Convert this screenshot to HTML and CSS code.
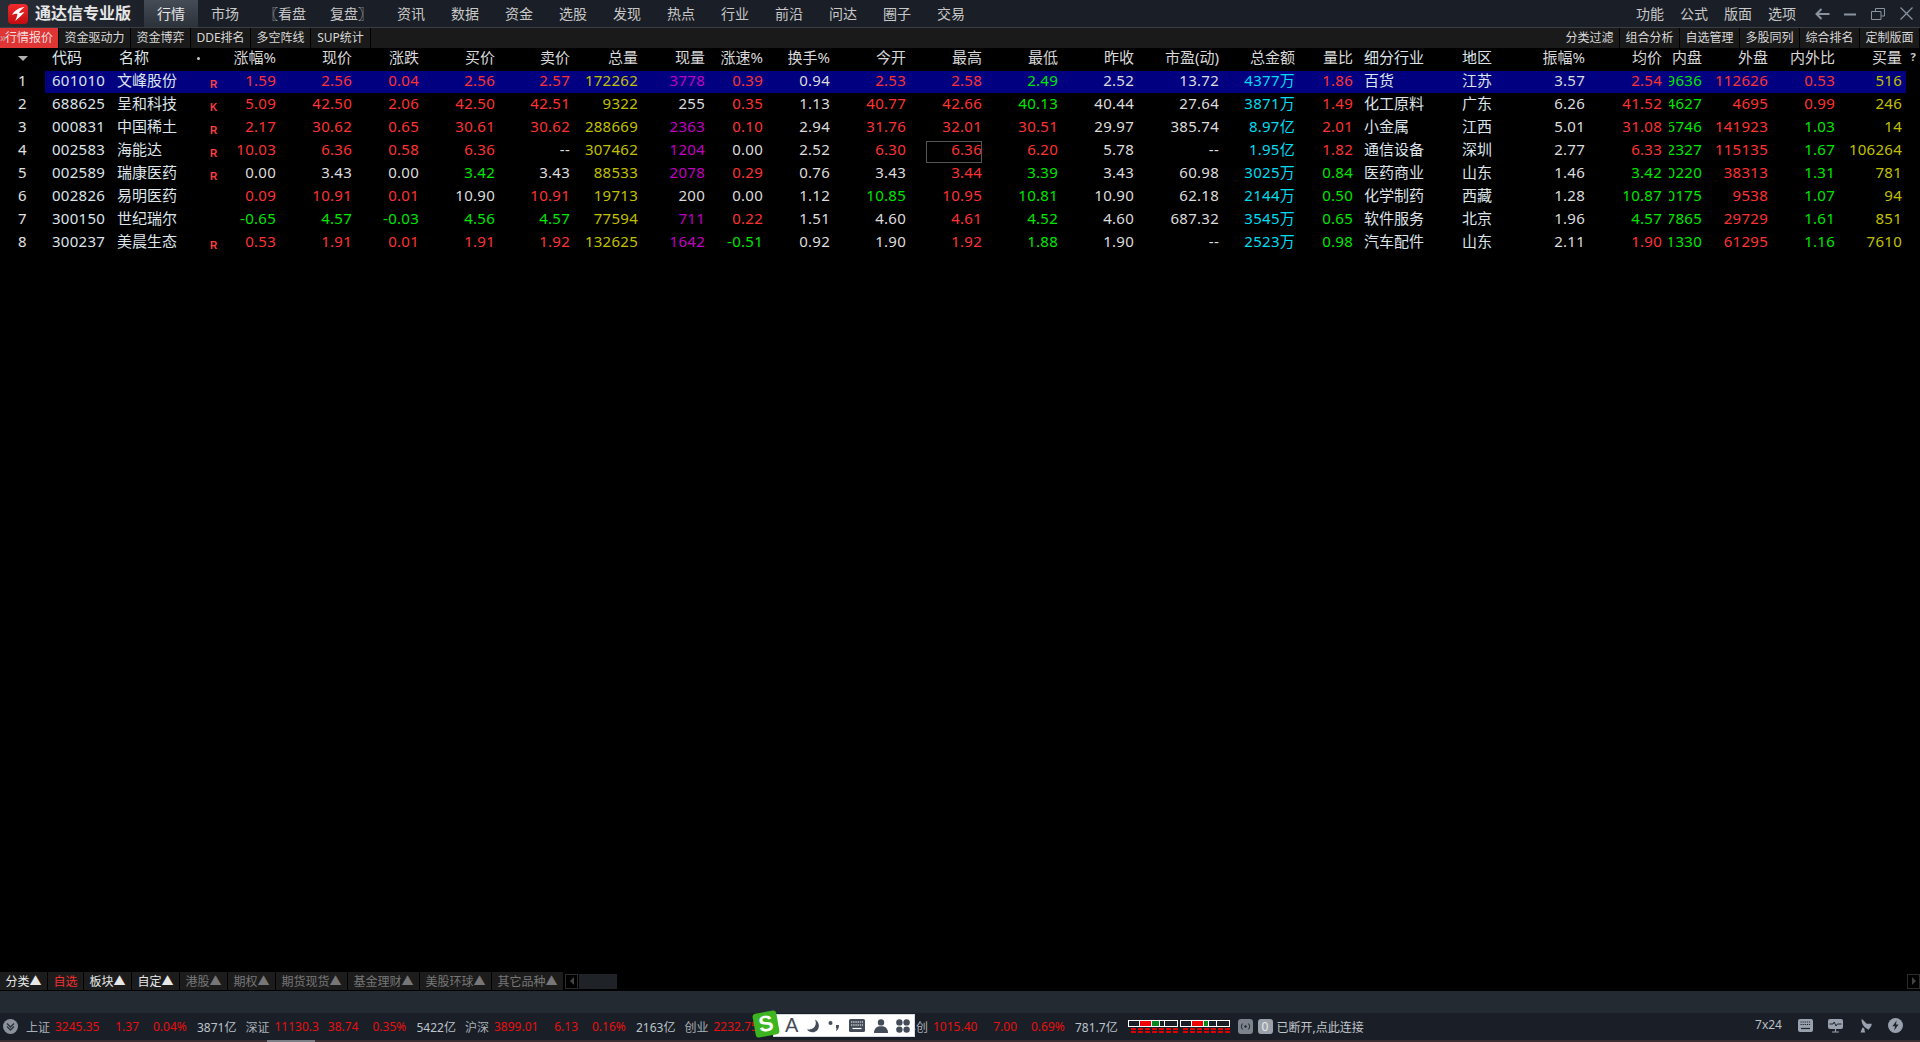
FILE: index.html
```html
<!DOCTYPE html>
<html lang="zh-CN">
<head>
  <meta charset="UTF-8" />
  <title>通达信专业版</title>
  <link rel="stylesheet" href="styles.css">
</head>
<body>

  <header class="titlebar">
    <div class="brand">
      <svg class="logo" viewBox="0 0 20 20">
        <defs>
          <linearGradient id="logoRed" x1="0" y1="0" x2="0" y2="1">
            <stop offset="0" stop-color="#f02a2c"/>
            <stop offset="1" stop-color="#c20c10"/>
          </linearGradient>
        </defs>
        <rect width="20" height="20" rx="4" fill="url(#logoRed)"/>
        <path d="M16.5 3 C12 3.5 7 5.5 4 11 C6 10 8 9.5 9.5 10 C9 12.5 8.5 14.5 7 17 C10.5 14.5 13 12 16.5 8 C14.5 8.5 12.5 9 11 9 C12 7 14 5 16.5 3 Z" fill="#fff"/>
      </svg>
      <span class="brand-name">通达信专业版</span>
    </div>
    <nav class="menu">
      <a class="active">行情</a>
      <a>市场</a>
      <a class="wide">〖看盘</a>
      <a class="wide">复盘〗</a>
      <a>资讯</a>
      <a>数据</a>
      <a>资金</a>
      <a>选股</a>
      <a>发现</a>
      <a>热点</a>
      <a>行业</a>
      <a>前沿</a>
      <a>问达</a>
      <a>圈子</a>
      <a>交易</a>
    </nav>
    <nav class="menu-right">
      <a>功能</a>
      <a>公式</a>
      <a>版面</a>
      <a>选项</a>
    </nav>
    <div class="window-btns">
      <svg viewBox="0 0 15 12" class="win-back"><path d="M14.5 6 H2 M6.5 1 L1.5 6 L6.5 11" fill="none" stroke="#8a94a0" stroke-width="2"/></svg>
      <svg viewBox="0 0 12 12" class="win-min"><path d="M0 6.5 H12" stroke="#8a94a0" stroke-width="2"/></svg>
      <svg viewBox="0 0 14 12" class="win-restore"><path d="M4.5 3 V.5 H13.5 V8 H10.5 M.5 3.5 H10 V11.5 H.5 Z" fill="none" stroke="#8a94a0"/></svg>
      <svg viewBox="0 0 13 13" class="win-close"><path d="M.5 .5 L12.5 12.5 M12.5 .5 L.5 12.5" stroke="#8a94a0" stroke-width="1.2"/></svg>
    </div>
  </header>

  <div class="subbar">
    <a class="sub active"><i class="sub-mark">»</i>行情报价</a>
    <a class="sub w-71">资金驱动力</a>
    <a class="sub">资金博弈</a>
    <a class="sub">DDE排名</a>
    <a class="sub">多空阵线</a>
    <a class="sub">SUP统计</a>
    <div class="subbar-fill"></div>
    <a class="sub">分类过滤</a>
    <a class="sub">组合分析</a>
    <a class="sub">自选管理</a>
    <a class="sub">多股同列</a>
    <a class="sub">综合排名</a>
    <a class="sub">定制版面</a>
  </div>

  <main class="board">
    <table class="quotes">
      <colgroup>
        <col style="width:45px"><col style="width:72px"><col style="width:75px"><col style="width:33px">
        <col style="width:51px"><col style="width:76px"><col style="width:67px"><col style="width:76px">
        <col style="width:75px"><col style="width:68px"><col style="width:67px"><col style="width:58px">
        <col style="width:67px"><col style="width:76px"><col style="width:76px"><col style="width:76px">
        <col style="width:76px"><col style="width:85px"><col style="width:76px"><col style="width:58px">
        <col style="width:109px"><col style="width:58px"><col style="width:65px"><col style="width:84px">
        <col style="width:33px"><col style="width:66px"><col style="width:67px"><col style="width:71px">
        <col style="width:14px">
      </colgroup>
      <thead>
        <tr>
          <th class="idx"><span class="sort-mark"></span></th>
          <th class="code">代码</th>
          <th class="name">名称</th>
          <th class="flag-head"><span class="dot"></span></th>
          <th>涨幅%</th><th>现价</th><th>涨跌</th><th>买价</th><th>卖价</th><th>总量</th><th>现量</th>
          <th>涨速%</th><th>换手%</th><th>今开</th><th>最高</th><th>最低</th><th>昨收</th><th>市盈(动)</th>
          <th>总金额</th><th>量比</th>
          <th class="sector">细分行业</th>
          <th class="area">地区</th>
          <th>振幅%</th>
          <th class="avg">均价</th>
          <th class="inner">内盘</th>
          <th>外盘</th><th>内外比</th>
          <th class="last">买量</th>
          <th class="help">?</th>
        </tr>
      </thead>
      <tbody>
        <tr class="selected">
          <td class="idx">1</td><td class="code">601010</td><td class="name">文峰股份</td><td class="flag">R</td>
          <td class="r">1.59</td><td class="r">2.56</td><td class="r">0.04</td><td class="r">2.56</td><td class="r">2.57</td>
          <td class="y">172262</td><td class="m">3778</td><td class="r">0.39</td><td class="w">0.94</td>
          <td class="r">2.53</td><td class="r">2.58</td><td class="g">2.49</td><td class="w">2.52</td><td class="w">13.72</td>
          <td class="c">4377万</td><td class="r">1.86</td><td class="sector">百货</td><td class="area">江苏</td><td class="w">3.57</td>
          <td class="r avg">2.54</td><td class="g inner">59636</td><td class="r">112626</td><td class="r">0.53</td><td class="y last">516</td><td class="help"></td>
        </tr>
        <tr>
          <td class="idx">2</td><td class="code">688625</td><td class="name">呈和科技</td><td class="flag">K</td>
          <td class="r">5.09</td><td class="r">42.50</td><td class="r">2.06</td><td class="r">42.50</td><td class="r">42.51</td>
          <td class="y">9322</td><td class="w">255</td><td class="r">0.35</td><td class="w">1.13</td>
          <td class="r">40.77</td><td class="r">42.66</td><td class="g">40.13</td><td class="w">40.44</td><td class="w">27.64</td>
          <td class="c">3871万</td><td class="r">1.49</td><td class="sector">化工原料</td><td class="area">广东</td><td class="w">6.26</td>
          <td class="r avg">41.52</td><td class="g inner">4627</td><td class="r">4695</td><td class="r">0.99</td><td class="y last">246</td><td class="help"></td>
        </tr>
        <tr>
          <td class="idx">3</td><td class="code">000831</td><td class="name">中国稀土</td><td class="flag">R</td>
          <td class="r">2.17</td><td class="r">30.62</td><td class="r">0.65</td><td class="r">30.61</td><td class="r">30.62</td>
          <td class="y">288669</td><td class="m">2363</td><td class="r">0.10</td><td class="w">2.94</td>
          <td class="r">31.76</td><td class="r">32.01</td><td class="r">30.51</td><td class="w">29.97</td><td class="w">385.74</td>
          <td class="c">8.97亿</td><td class="r">2.01</td><td class="sector">小金属</td><td class="area">江西</td><td class="w">5.01</td>
          <td class="r avg">31.08</td><td class="g inner">146746</td><td class="r">141923</td><td class="g">1.03</td><td class="y last">14</td><td class="help"></td>
        </tr>
        <tr>
          <td class="idx">4</td><td class="code">002583</td><td class="name">海能达</td><td class="flag">R</td>
          <td class="r">10.03</td><td class="r">6.36</td><td class="r">0.58</td><td class="r">6.36</td><td class="w">--</td>
          <td class="y">307462</td><td class="m">1204</td><td class="w">0.00</td><td class="w">2.52</td>
          <td class="r">6.30</td><td class="r cursor">6.36</td><td class="r">6.20</td><td class="w">5.78</td><td class="w">--</td>
          <td class="c">1.95亿</td><td class="r">1.82</td><td class="sector">通信设备</td><td class="area">深圳</td><td class="w">2.77</td>
          <td class="r avg">6.33</td><td class="g inner">192327</td><td class="r">115135</td><td class="g">1.67</td><td class="y last">106264</td><td class="help"></td>
        </tr>
        <tr>
          <td class="idx">5</td><td class="code">002589</td><td class="name">瑞康医药</td><td class="flag">R</td>
          <td class="w">0.00</td><td class="w">3.43</td><td class="w">0.00</td><td class="g">3.42</td><td class="w">3.43</td>
          <td class="y">88533</td><td class="m">2078</td><td class="r">0.29</td><td class="w">0.76</td>
          <td class="w">3.43</td><td class="r">3.44</td><td class="g">3.39</td><td class="w">3.43</td><td class="w">60.98</td>
          <td class="c">3025万</td><td class="g">0.84</td><td class="sector">医药商业</td><td class="area">山东</td><td class="w">1.46</td>
          <td class="g avg">3.42</td><td class="g inner">50220</td><td class="r">38313</td><td class="g">1.31</td><td class="y last">781</td><td class="help"></td>
        </tr>
        <tr>
          <td class="idx">6</td><td class="code">002826</td><td class="name">易明医药</td><td class="flag"></td>
          <td class="r">0.09</td><td class="r">10.91</td><td class="r">0.01</td><td class="w">10.90</td><td class="r">10.91</td>
          <td class="y">19713</td><td class="w">200</td><td class="w">0.00</td><td class="w">1.12</td>
          <td class="g">10.85</td><td class="r">10.95</td><td class="g">10.81</td><td class="w">10.90</td><td class="w">62.18</td>
          <td class="c">2144万</td><td class="g">0.50</td><td class="sector">化学制药</td><td class="area">西藏</td><td class="w">1.28</td>
          <td class="g avg">10.87</td><td class="g inner">10175</td><td class="r">9538</td><td class="g">1.07</td><td class="y last">94</td><td class="help"></td>
        </tr>
        <tr>
          <td class="idx">7</td><td class="code">300150</td><td class="name">世纪瑞尔</td><td class="flag"></td>
          <td class="g">-0.65</td><td class="g">4.57</td><td class="g">-0.03</td><td class="g">4.56</td><td class="g">4.57</td>
          <td class="y">77594</td><td class="m">711</td><td class="r">0.22</td><td class="w">1.51</td>
          <td class="w">4.60</td><td class="r">4.61</td><td class="g">4.52</td><td class="w">4.60</td><td class="w">687.32</td>
          <td class="c">3545万</td><td class="g">0.65</td><td class="sector">软件服务</td><td class="area">北京</td><td class="w">1.96</td>
          <td class="g avg">4.57</td><td class="g inner">47865</td><td class="r">29729</td><td class="g">1.61</td><td class="y last">851</td><td class="help"></td>
        </tr>
        <tr>
          <td class="idx">8</td><td class="code">300237</td><td class="name">美晨生态</td><td class="flag">R</td>
          <td class="r">0.53</td><td class="r">1.91</td><td class="r">0.01</td><td class="r">1.91</td><td class="r">1.92</td>
          <td class="y">132625</td><td class="m">1642</td><td class="g">-0.51</td><td class="w">0.92</td>
          <td class="w">1.90</td><td class="r">1.92</td><td class="g">1.88</td><td class="w">1.90</td><td class="w">--</td>
          <td class="c">2523万</td><td class="g">0.98</td><td class="sector">汽车配件</td><td class="area">山东</td><td class="w">2.11</td>
          <td class="r avg">1.90</td><td class="g inner">71330</td><td class="r">61295</td><td class="g">1.16</td><td class="y last">7610</td><td class="help"></td>
        </tr>
      </tbody>
    </table>
  </main>

  <div class="tabstrip">
    <a class="tab">分类▲</a>
    <a class="tab red">自选</a>
    <a class="tab">板块▲</a>
    <a class="tab">自定▲</a>
    <a class="tab dim">港股▲</a>
    <a class="tab dim">期权▲</a>
    <a class="tab dim long">期货现货▲</a>
    <a class="tab dim long">基金理财▲</a>
    <a class="tab dim long">美股环球▲</a>
    <a class="tab dim long">其它品种▲</a>
    <a class="scroll-btn"><span class="arrow-left"></span></a>
    <div class="scroll-thumb"></div>
    <div class="tabstrip-fill"></div>
    <a class="scroll-btn"><span class="arrow-right"></span></a>
  </div>

  <div class="band"></div>

  <footer class="status">
    <svg class="collapse" viewBox="0 0 15 15">
      <circle cx="7.5" cy="7.5" r="7.5" fill="#8b929c"/>
      <path d="M4 4.5 L7.5 8 L11 4.5 M4 7.5 L7.5 11 L11 7.5" fill="none" stroke="#2c323a" stroke-width="1.3"/>
    </svg>

    <div class="index"><span>上证</span><span class="up">3245.35</span><span class="up num">1.37</span><span class="up pct">0.04%</span><span class="amt">3871亿</span></div>
    <div class="index"><span>深证</span><span class="up">11130.3</span><span class="up num">38.74</span><span class="up pct">0.35%</span><span class="amt">5422亿</span></div>
    <div class="index"><span>沪深</span><span class="up">3899.01</span><span class="up num">6.13</span><span class="up pct">0.16%</span><span class="amt">2163亿</span></div>
    <div class="index"><span>创业</span><span class="up">2232.75</span></div>
    <div class="index"><span>科创</span><span class="up">1015.40</span><span class="up num">7.00</span><span class="up pct">0.69%</span><span class="amt">781.7亿</span></div>

    <div class="meter">
      <div class="meter-bar"><i class="s12"></i><i class="s12 hot"></i><i class="s8 cool"></i><i class="s5"></i><i class="s12"></i></div>
      <div class="meter-dash"></div>
    </div>
    <div class="meter">
      <div class="meter-bar"><i class="s12"></i><i class="s12 hot"></i><i class="s5 cool"></i><i class="s8"></i><i class="s12"></i></div>
      <div class="meter-dash"></div>
    </div>

    <svg class="net-icon" viewBox="0 0 15 15">
      <rect width="15" height="15" rx="3" fill="#7d838d"/>
      <circle cx="7.5" cy="7.5" r="1.2" fill="#20252c"/>
      <path d="M4.6 4.5 C3 6.5 3 8.5 4.6 10.5 M10.4 4.5 C12 6.5 12 8.5 10.4 10.5" fill="none" stroke="#20252c"/>
    </svg>
    <span class="zero">0</span>
    <span class="conn">已断开,点此连接</span>

    <span class="uptime">7x24</span>
    <svg class="tray" viewBox="0 0 15 15">
      <rect y="1" width="15" height="13" rx="2" fill="#98a1ad"/>
      <path d="M2.5 4 H12.5 M2.5 6.5 H12.5" stroke="#20252c" stroke-dasharray="1.2 .9"/>
      <path d="M3 10.5 H12" stroke="#20252c" stroke-width="1.2"/>
    </svg>
    <svg class="tray" viewBox="0 0 15 15">
      <rect y="1" width="15" height="10" rx="2" fill="#98a1ad"/>
      <path d="M1.5 6 H5 L6.2 4 L8 8 L9.4 6 H13.5" fill="none" stroke="#20252c"/>
      <path d="M7.5 11 V13.5 M4 14 H11" stroke="#98a1ad" stroke-width="1.2"/>
    </svg>
    <svg class="tray" viewBox="0 0 15 18">
      <path d="M3 1 C2 6 5 11 11 14 C13.5 12 15 9.5 15 7 L9 7 Z" fill="#98a1ad"/>
      <path d="M4 11 L1.5 17.5 H7 L6 12.5" fill="#98a1ad"/>
    </svg>
    <svg class="tray" viewBox="0 0 15 15">
      <circle cx="7.5" cy="7.5" r="7.5" fill="#98a1ad"/>
      <path d="M8.6 2.5 L4.4 8.3 H7 L6.2 12.5 L10.6 6.6 H8 Z" fill="#20252c"/>
    </svg>

    <div class="ime">
      <div class="ime-logo"><span>S</span></div>
      <span class="ime-a">A</span>
      <svg class="ime-moon" viewBox="0 0 14 14"><path d="M9 .5 C11.5 6 8 11 1 10.5 C3 13.5 8 14.5 11 11.5 C14 8.5 13.5 3 9 .5 Z" fill="#454c59"/></svg>
      <svg class="ime-punct" viewBox="0 0 12 12"><circle cx="2.5" cy="3" r="2" fill="#454c59"/><path d="M8 5 H11 C11 8 10 10 8 11 L8.6 8 H8 Z" fill="#454c59"/></svg>
      <svg class="ime-key" viewBox="0 0 16 13">
        <rect width="16" height="13" rx="1.5" fill="#454c59"/>
        <path d="M2 3 H14 M2 6 H14" stroke="#fff" stroke-dasharray="1.4 .8"/>
        <path d="M3.5 9.5 H12.5" stroke="#fff" stroke-width="1.2"/>
      </svg>
      <svg class="ime-user" viewBox="0 0 14 14"><circle cx="7" cy="3.4" r="3.2" fill="#454c59"/><path d="M0 14 C0 9 3 7.2 7 7.2 C11 7.2 14 9 14 14 Z" fill="#454c59"/></svg>
      <svg class="ime-apps" viewBox="0 0 14 14">
        <circle cx="3.4" cy="3.4" r="3.2" fill="#454c59"/><circle cx="10.6" cy="3.4" r="3.2" fill="#454c59"/>
        <circle cx="3.4" cy="10.6" r="3.2" fill="#454c59"/><circle cx="10.6" cy="10.6" r="3.2" fill="#454c59"/>
      </svg>
    </div>
  </footer>

  <div class="edge"><span class="edge-lit"></span></div>

</body>
</html>
```

FILE: styles.css
```css
* {
  box-sizing: border-box;
}

html, body {
  margin: 0;
  height: 100%;
}

body {
  display: flex;
  flex-direction: column;
  height: 100vh;
  overflow: hidden;
  background: #000;
  color: #dcdcdc;
  font-family: "Noto Sans", "Noto Sans CJK SC", sans-serif;
}

/* title bar */
.titlebar {
  display: flex;
  align-items: stretch;
  height: 28px;
  flex: none;
  background: #1a1e26;
  border-bottom: 1px solid #3a3f46;
}

.brand {
  display: flex;
  align-items: center;
  width: 144px;
  padding-left: 8px;
  background: linear-gradient(90deg, #282c35, #1c2028);
}

.logo {
  width: 20px;
  height: 20px;
  margin-right: 7px;
}

.brand-name {
  padding-bottom: 3px;
  font-size: 16px;
  font-weight: bold;
  color: #e6e6e6;
}

.menu, .menu-right {
  display: flex;
  font-size: 14px;
  line-height: 27px;
  color: #c8c8c8;
}

.menu a {
  width: 54px;
  text-align: center;
}

.menu a.wide {
  width: 66px;
}

.menu a.active {
  background: linear-gradient(#454c56, #2c323a);
  color: #e8e8e8;
}

.menu-right {
  margin-left: auto;
  gap: 16px;
}

.window-btns {
  display: flex;
  align-items: center;
  width: 124px;
  padding-left: 19px;
}

.win-back {
  width: 15px;
  height: 12px;
  margin-right: 14px;
}

.win-min {
  width: 12px;
  height: 12px;
  margin-right: 15px;
}

.win-restore {
  width: 14px;
  height: 12px;
  margin-right: 15px;
}

.win-close {
  width: 13px;
  height: 13px;
}

/* second row */
.subbar {
  display: flex;
  height: 20px;
  flex: none;
  background: #1a1a1a;
  font-size: 12px;
  line-height: 19px;
}

.sub {
  width: 60px;
  text-align: center;
  color: #d8d8d8;
  border-right: 1px solid #000;
  white-space: nowrap;
}

.sub.w-71 {
  width: 72px;
}

.sub.active {
  width: 59px;
  padding-left: 5px;
  text-align: left;
  background: #e03535;
  color: #f4dede;
  overflow: hidden;
}

.sub-mark {
  display: inline-block;
  width: 0;
  margin-left: -5px;
  margin-right: 5px;
  font-style: normal;
  color: #c9a0a0;
}

.subbar-fill {
  flex: 1;
}

/* quote table */
.board {
  flex: 1;
  min-height: 0;
}

.quotes {
  width: 1920px;
  table-layout: fixed;
  border-collapse: separate;
  border-spacing: 0;
  font-size: 15px;
}

.quotes th, .quotes td {
  height: 23px;
  padding: 0 0 4px;
  text-align: right;
  font-weight: normal;
  white-space: nowrap;
  border-bottom: 1px solid transparent;
  background-clip: padding-box;
  line-height: 18px;
}

.quotes td {
  letter-spacing: .27px;
}

.quotes th {
  color: #d8d8d8;
}

.quotes .idx {
  text-align: center;
  color: #e0e0e0;
}

.quotes .code {
  padding-left: 7px;
  text-align: left;
  color: #dde4ea;
}

.quotes .name {
  text-align: left;
  color: #dde4ea;
  letter-spacing: 0;
}

.quotes th.name {
  padding-left: 2px;
}

.quotes .sector {
  padding-left: 11px;
  text-align: left;
  color: #dde4ea;
  letter-spacing: 0;
}

.quotes .area {
  text-align: left;
  color: #dde4ea;
  letter-spacing: 0;
}

.quotes .avg {
  padding-right: 7px;
}

.quotes .inner {
  direction: rtl;
  overflow: hidden;
}

.quotes .last {
  padding-right: 4px;
}

.quotes .help {
  text-align: center;
  font-size: 11px;
  font-weight: bold;
  color: #ccc;
}

.quotes .flag {
  padding: 5px 0 0 18px;
  text-align: left;
  font: bold 10px "Liberation Sans", sans-serif;
  color: #ff4040;
}

.quotes .flag-head {
  padding-left: 5px;
  text-align: left;
}

.sort-mark {
  display: inline-block;
  border-left: 5px solid transparent;
  border-right: 5px solid transparent;
  border-top: 5px solid #b0b0b0;
  vertical-align: 2px;
}

.dot {
  display: inline-block;
  width: 3px;
  height: 3px;
  border-radius: 50%;
  background: #ccc;
  vertical-align: 3px;
}

.selected td {
  background-color: #000080;
}

.selected td.idx, .selected td.help {
  background-color: transparent;
}

/* focus box drawn over the cell */
.quotes .cursor {
  position: relative;
}

.quotes .cursor::after {
  content: "";
  position: absolute;
  top: 1px;
  right: 0;
  width: 54px;
  height: 20px;
  border: 1px solid #555;
}

.quotes .r { color: #ff3232; }
.quotes .g { color: #00e600; }
.quotes .w { color: #dcdcdc; }
.quotes .y { color: #c0c000; }
.quotes .m { color: #c000c0; }
.quotes .c { color: #00dcf0; }

/* category tabs */
.tabstrip {
  display: flex;
  align-items: center;
  height: 18px;
  margin-bottom: 1px;
  flex: none;
  font-size: 12px;
  gap: 1px;
}

.tab {
  width: 47px;
  height: 18px;
  line-height: 19px;
  text-align: center;
  background: #1c1c1c;
  color: #e8e8e8;
  white-space: nowrap;
}

.tab.red {
  width: 35px;
  color: #f03030;
}

.tab.dim {
  color: #777;
}

.tab.long {
  width: 71px;
}

.scroll-btn {
  display: flex;
  align-items: center;
  justify-content: center;
  width: 13px;
  height: 15px;
  margin-left: 1px;
  border: 1px solid #2c2c2c;
}

.arrow-left, .arrow-right {
  border-top: 4px solid transparent;
  border-bottom: 4px solid transparent;
}

.arrow-left {
  border-right: 4px solid #444;
}

.arrow-right {
  border-left: 4px solid #444;
}

.scroll-thumb {
  width: 38px;
  height: 15px;
  background: #1f2226;
}

.tabstrip-fill {
  flex: 1;
}

/* status area */
.band {
  height: 22px;
  flex: none;
  background: #232a32;
}

.status {
  position: relative;
  display: flex;
  align-items: center;
  height: 27px;
  flex: none;
  background: #1a1e26;
  font-size: 12px;
  color: #a8b0b8;
}

.collapse {
  width: 15px;
  height: 15px;
  margin: 0 8px 0 3px;
}

.index {
  display: grid;
  grid-template-columns: 29px 50px 34px 48px 58.5px;
  flex: none;
  white-space: nowrap;
}

.index .up {
  color: #e81010;
}

.index .num {
  text-align: right;
}

.index .pct {
  padding-left: 14px;
}

.index .amt {
  padding-left: 10px;
  color: #bcc4cc;
}

.meter {
  width: 50px;
  margin-left: 4px;
}

.meter + .meter {
  margin-left: 2px;
}

.meter-bar {
  display: flex;
  height: 7px;
  border: 1px solid #fff;
  background: #1a1e26;
}

.meter-bar i {
  border-right: 1px solid #fff;
}

.meter-bar i:last-child {
  border-right: 0;
}

.s12 { width: 12px; }
.s8 { width: 8px; }
.s5 { width: 5px; }
.hot { background: #f00000; }
.cool { background: #008a20; }

.meter-dash {
  height: 5px;
  margin: 1px 0 0 3px;
  background:
    repeating-linear-gradient(90deg, #e00000 0 5.5px, transparent 5.5px 7px) 0 0 / 100% 2px no-repeat,
    repeating-linear-gradient(90deg, #e00000 0 5.5px, transparent 5.5px 7px) 0 3px / 100% 2px no-repeat;
}

.net-icon {
  width: 15px;
  height: 15px;
  margin-left: 8px;
}

.zero {
  width: 15px;
  height: 15px;
  margin-left: 5px;
  border-radius: 3px;
  background: #9aa1ab;
  color: #e8e8e8;
  font-size: 12px;
  line-height: 15px;
  text-align: center;
}

.conn {
  margin-left: 4px;
  color: #c0c6cc;
}

.uptime {
  margin-left: auto;
  padding-bottom: 4px;
  color: #b8c0c8;
}

.tray {
  width: 15px;
  height: 15px;
  margin-left: 15px;
  margin-bottom: 2px;
}

.uptime + .tray {
  margin-left: 16px;
}

.tray:last-of-type {
  margin-right: 17px;
}

/* floating input method bar */
.ime {
  position: absolute;
  left: 773px;
  top: 1px;
  display: flex;
  align-items: center;
  width: 142px;
  height: 23px;
  background: #fff;
  border: 1px solid #d4dae4;
}

.ime-logo {
  position: absolute;
  left: -20px;
  top: -3px;
  display: flex;
  align-items: center;
  justify-content: center;
  width: 24px;
  height: 24px;
  border-radius: 3px;
  background: #3cb521;
  color: #fff;
  font: bold 22px "Liberation Sans", sans-serif;
  transform: rotate(-10deg);
}

.ime-a {
  margin-left: 11px;
  font: 20px "Liberation Sans", sans-serif;
  color: #454c59;
}

.ime-moon {
  width: 14px;
  height: 14px;
  margin-left: 8px;
}

.ime-punct {
  width: 12px;
  height: 12px;
  margin-left: 8px;
}

.ime-key {
  width: 16px;
  height: 13px;
  margin-left: 9px;
}

.ime-user {
  width: 14px;
  height: 14px;
  margin-left: 9px;
}

.ime-apps {
  width: 14px;
  height: 14px;
  margin-left: 8px;
}

.edge {
  height: 2px;
  flex: none;
  background: #3a3034;
}

.edge-lit {
  display: block;
  width: 48px;
  height: 2px;
  margin-left: 267px;
  background: #7d7f86;
}
```
